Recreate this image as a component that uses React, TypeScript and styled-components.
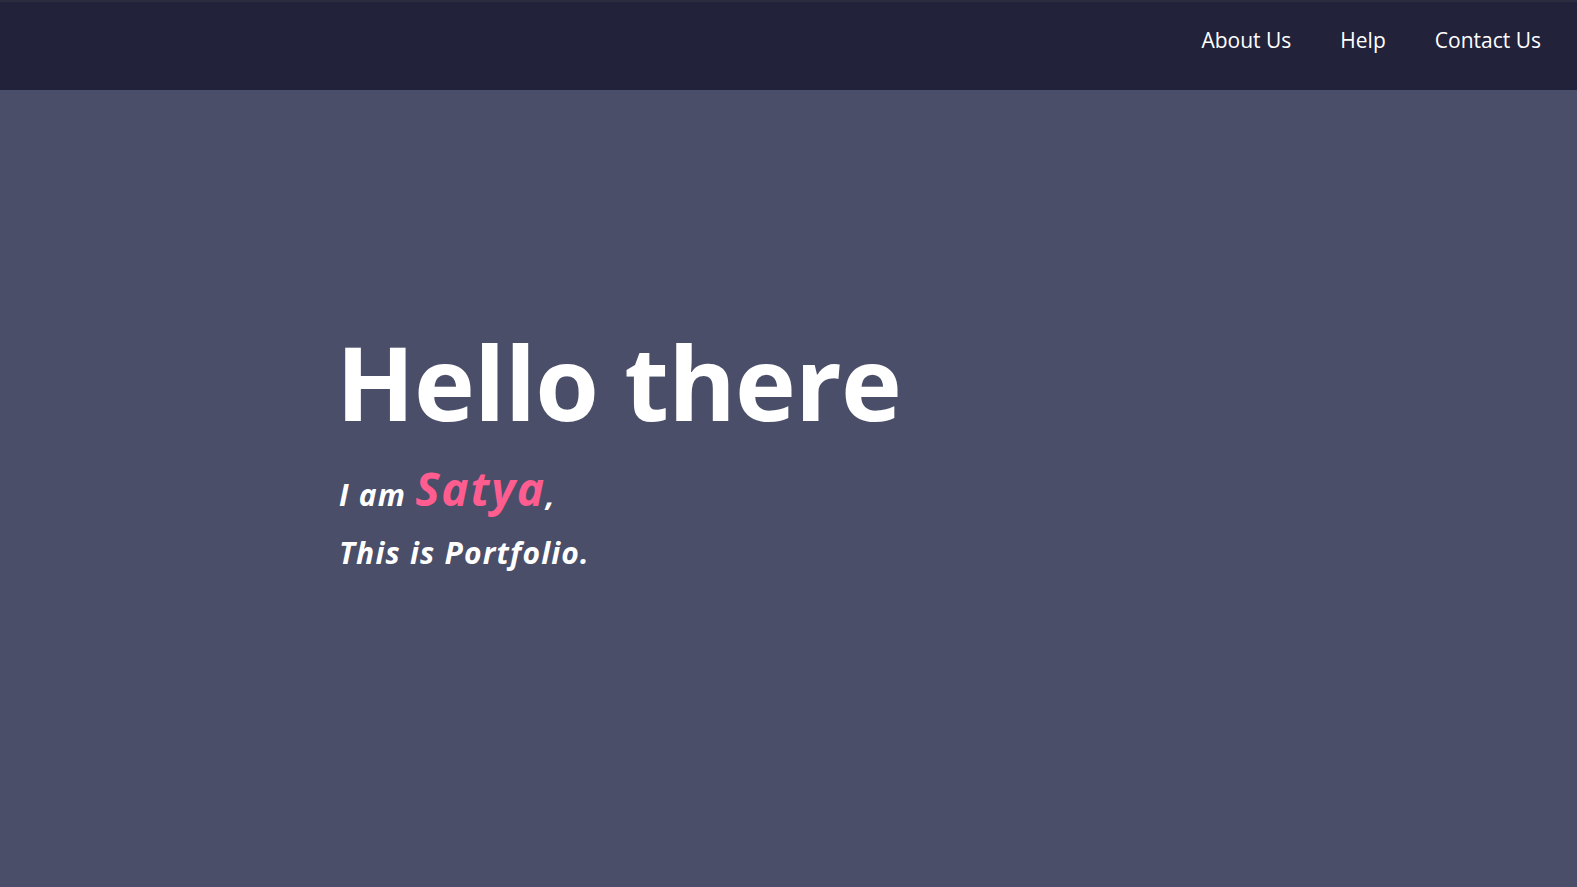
import React from 'react';
import styled, { createGlobalStyle } from 'styled-components';

const GlobalStyle = createGlobalStyle`
  * {
    box-sizing: border-box;
  }

  body {
    margin: 0;
    background: #4a4e69;
    font-family: "Open Sans", "Noto Sans", sans-serif;
  }
`;

const Page = styled.div`
  min-height: 100vh;
  display: flex;
  flex-direction: column;
  background: #4a4e69;
`;

const NavBar = styled.nav`
  height: 90px;
  background: #22223b;
  border-top: 2px solid #2c2c40;
  display: flex;
  align-items: center;
  justify-content: flex-end;
  padding: 0 36px 13px 0;
`;

const NavList = styled.ul`
  list-style: none;
  margin: 0;
  padding: 0;
  display: flex;
  gap: 49px;
`;

const NavLink = styled.a`
  color: #ffffff;
  font-size: 21px;
  text-decoration: none;
  cursor: pointer;
`;

const Hero = styled.section`
  flex: 1;
  padding: 230px 0 0 336px;
  color: #ffffff;
`;

const Title = styled.h1`
  margin: 0 0 21px;
  font-size: 103px;
  font-weight: 700;
  letter-spacing: -0.8px;
  line-height: 1.2;
`;

const Tagline = styled.p`
  margin: 0;
  padding-left: 3px;
  font-size: 30px;
  font-weight: 700;
  font-style: italic;
  letter-spacing: 1.2px;
  line-height: 58px;
`;

const Name = styled.span`
  color: #ff5d8f;
  font-size: 46px;
  letter-spacing: 1.8px;
  line-height: 1;
`;

const App = () => {
  return (
    <Page>
      <GlobalStyle />
      <NavBar>
        <NavList>
          <li><NavLink>About Us</NavLink></li>
          <li><NavLink>Help</NavLink></li>
          <li><NavLink>Contact Us</NavLink></li>
        </NavList>
      </NavBar>
      <Hero>
        <Title>Hello there</Title>
        <Tagline>
          I am <Name>Satya</Name>,
        </Tagline>
        <Tagline>This is Portfolio.</Tagline>
      </Hero>
    </Page>
  );
};

export default App;
